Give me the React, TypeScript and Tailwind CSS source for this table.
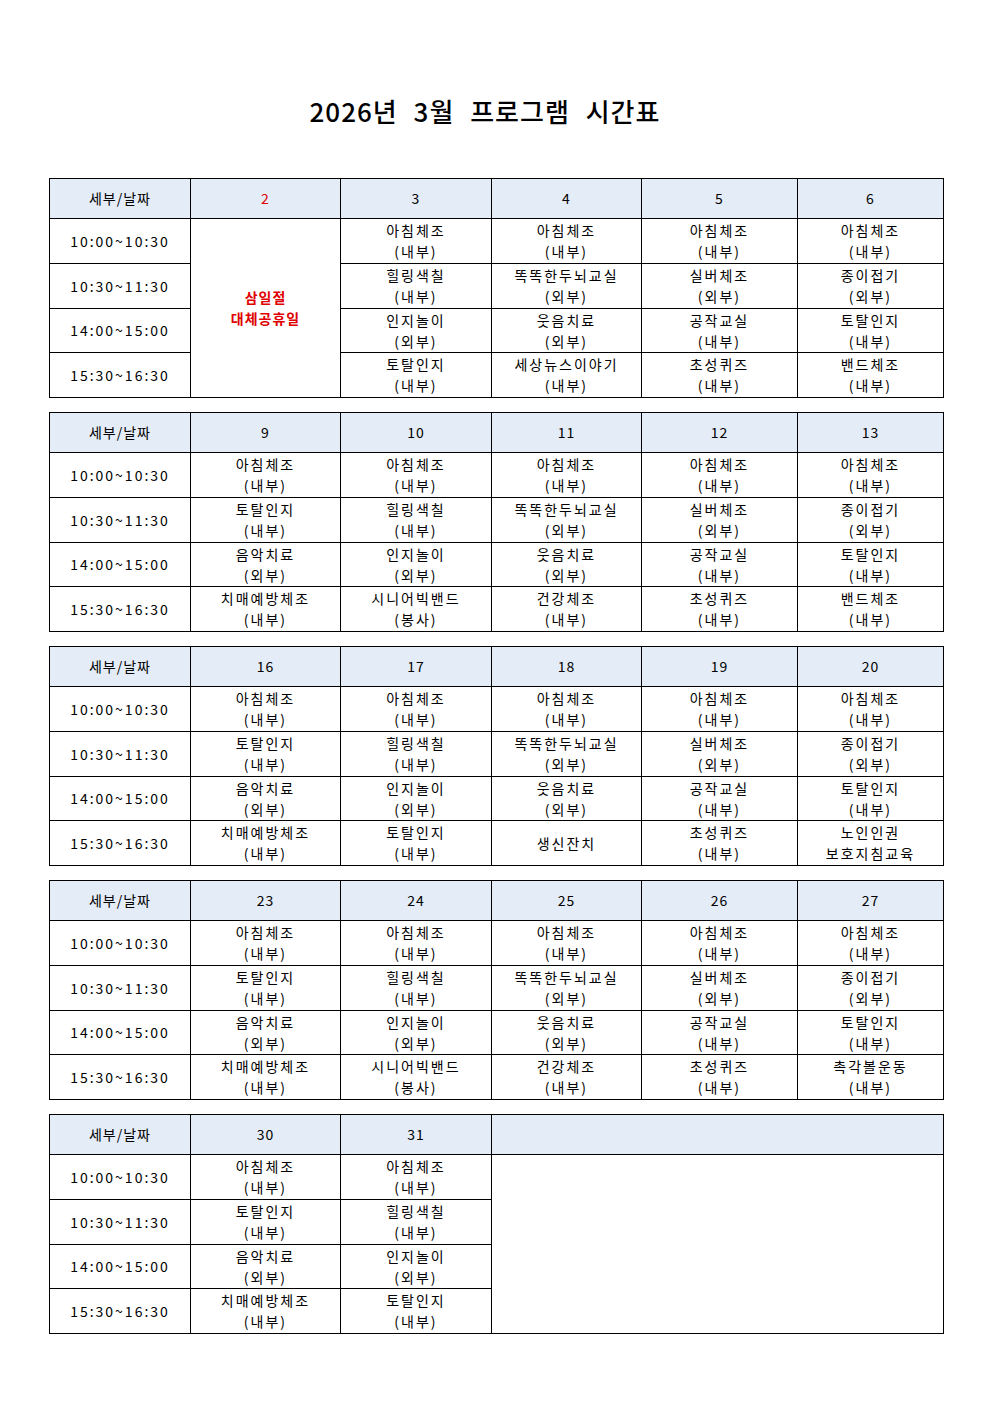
import React from "react";

type Cell = [string, string?];

const times = ["10:00~10:30", "10:30~11:30", "14:00~15:00", "15:30~16:30"];

const weekA: Cell[] = [
  ["아침체조", "(내부)"],
  ["힐링색칠", "(내부)"],
  ["인지놀이", "(외부)"],
];

const week1: { day: string; cells: Cell[] }[] = [
  { day: "3", cells: [["아침체조", "(내부)"], ["힐링색칠", "(내부)"], ["인지놀이", "(외부)"], ["토탈인지", "(내부)"]] },
  { day: "4", cells: [["아침체조", "(내부)"], ["똑똑한두뇌교실", "(외부)"], ["웃음치료", "(외부)"], ["세상뉴스이야기", "(내부)"]] },
  { day: "5", cells: [["아침체조", "(내부)"], ["실버체조", "(외부)"], ["공작교실", "(내부)"], ["초성퀴즈", "(내부)"]] },
  { day: "6", cells: [["아침체조", "(내부)"], ["종이접기", "(외부)"], ["토탈인지", "(내부)"], ["밴드체조", "(내부)"]] },
];

const mon: Cell[] = [["아침체조", "(내부)"], ["토탈인지", "(내부)"], ["음악치료", "(외부)"], ["치매예방체조", "(내부)"]];
const tue1: Cell[] = [...weekA, ["시니어빅밴드", "(봉사)"]];
const tue2: Cell[] = [...weekA, ["토탈인지", "(내부)"]];
const wed1: Cell[] = [["아침체조", "(내부)"], ["똑똑한두뇌교실", "(외부)"], ["웃음치료", "(외부)"], ["건강체조", "(내부)"]];
const wed2: Cell[] = [["아침체조", "(내부)"], ["똑똑한두뇌교실", "(외부)"], ["웃음치료", "(외부)"], ["생신잔치"]];
const thu: Cell[] = [["아침체조", "(내부)"], ["실버체조", "(외부)"], ["공작교실", "(내부)"], ["초성퀴즈", "(내부)"]];
const fri1: Cell[] = [["아침체조", "(내부)"], ["종이접기", "(외부)"], ["토탈인지", "(내부)"], ["밴드체조", "(내부)"]];
const fri2: Cell[] = [["아침체조", "(내부)"], ["종이접기", "(외부)"], ["토탈인지", "(내부)"], ["노인인권", "보호지침교육"]];
const fri3: Cell[] = [["아침체조", "(내부)"], ["종이접기", "(외부)"], ["토탈인지", "(내부)"], ["촉각볼운동", "(내부)"]];

const weeks = [
  { days: [{ day: "9", cells: mon }, { day: "10", cells: tue1 }, { day: "11", cells: wed1 }, { day: "12", cells: thu }, { day: "13", cells: fri1 }] },
  { days: [{ day: "16", cells: mon }, { day: "17", cells: tue2 }, { day: "18", cells: wed2 }, { day: "19", cells: thu }, { day: "20", cells: fri2 }] },
  { days: [{ day: "23", cells: mon }, { day: "24", cells: tue1 }, { day: "25", cells: wed1 }, { day: "26", cells: thu }, { day: "27", cells: fri3 }] },
];

const rowH = ["h-[45px]", "h-[45px]", "h-[44px]", "h-[45px]"];

const cellBase = "border border-black text-center align-middle p-0 text-[14px] leading-[21px]";
const cellCls = cellBase + " tracking-[2px] text-black";
const headBase = "border border-black text-center align-middle p-0 h-[40px] bg-[#e4ecf7] text-[14px] tracking-[1px] font-normal";
const headCls = headBase + " text-black";

function Colgroup() {
  return (
    <colgroup>
      <col className="w-[141px]" />
      <col className="w-[150px]" />
      <col className="w-[151px]" />
      <col className="w-[150px]" />
      <col className="w-[156px]" />
      <col className="w-[146px]" />
    </colgroup>
  );
}

function CellContent({ c }: { c: Cell }) {
  return (
    <div className="flex flex-col items-center">
      <span>{c[0]}</span>
      {c[1] && <span>{c[1]}</span>}
    </div>
  );
}

function TimeCell({ t }: { t: string }) {
  return <td className={cellCls}>{t}</td>;
}

function Week({ days }: { days: { day: string; cells: Cell[] }[] }) {
  return (
    <table className="w-[894px] table-fixed border-collapse">
      <Colgroup />
      <thead>
        <tr>
          <th className={headCls}>세부/날짜</th>
          {days.map((d) => (
            <th key={d.day} className={headCls}>{d.day}</th>
          ))}
        </tr>
      </thead>
      <tbody>
        {times.map((t, i) => (
          <tr key={t} className={rowH[i]}>
            <TimeCell t={t} />
            {days.map((d) => (
              <td key={d.day} className={cellCls}>
                <CellContent c={d.cells[i]} />
              </td>
            ))}
          </tr>
        ))}
      </tbody>
    </table>
  );
}

export default function App() {
  return (
    <div
      className="w-[992px] min-h-[1403px] bg-white flex flex-col items-center"
      style={{ fontFamily: '"Noto Sans CJK KR", "Noto Sans", sans-serif' }}
    >
      <h1 className="mt-[93px] mr-[22px] text-[26px] leading-[36px] font-medium text-black tracking-[1px] [word-spacing:9px]">
        2026년 3월 프로그램 시간표
      </h1>
      <div className="mt-[49px] pl-[1px] flex flex-col gap-[14px]">
        <table className="w-[894px] table-fixed border-collapse">
          <Colgroup />
          <thead>
            <tr>
              <th className={headCls}>세부/날짜</th>
              <th className={headBase + " text-[#e00000]"}>2</th>
              {week1.map((d) => (
                <th key={d.day} className={headCls}>{d.day}</th>
              ))}
            </tr>
          </thead>
          <tbody>
            {times.map((t, i) => (
              <tr key={t} className={rowH[i]}>
                <TimeCell t={t} />
                {i === 0 && (
                  <td rowSpan={4} className={cellBase + " font-bold text-[#e00000] tracking-[1px]"}>
                    <div className="flex flex-col items-center">
                      <span>삼일절</span>
                      <span>대체공휴일</span>
                    </div>
                  </td>
                )}
                {week1.map((d) => (
                  <td key={d.day} className={cellCls}>
                    <CellContent c={d.cells[i]} />
                  </td>
                ))}
              </tr>
            ))}
          </tbody>
        </table>
        {weeks.map((w, k) => (
          <Week key={k} days={w.days} />
        ))}
        <table className="w-[894px] table-fixed border-collapse">
          <Colgroup />
          <thead>
            <tr>
              <th className={headCls}>세부/날짜</th>
              <th className={headCls}>30</th>
              <th className={headCls}>31</th>
              <th colSpan={3} className={headCls}></th>
            </tr>
          </thead>
          <tbody>
            {times.map((t, i) => (
              <tr key={t} className={rowH[i]}>
                <TimeCell t={t} />
                <td className={cellCls}>
                  <CellContent c={mon[i]} />
                </td>
                <td className={cellCls}>
                  <CellContent c={tue2[i]} />
                </td>
                {i === 0 && <td rowSpan={4} colSpan={3} className={cellCls}></td>}
              </tr>
            ))}
          </tbody>
        </table>
      </div>
    </div>
  );
}
